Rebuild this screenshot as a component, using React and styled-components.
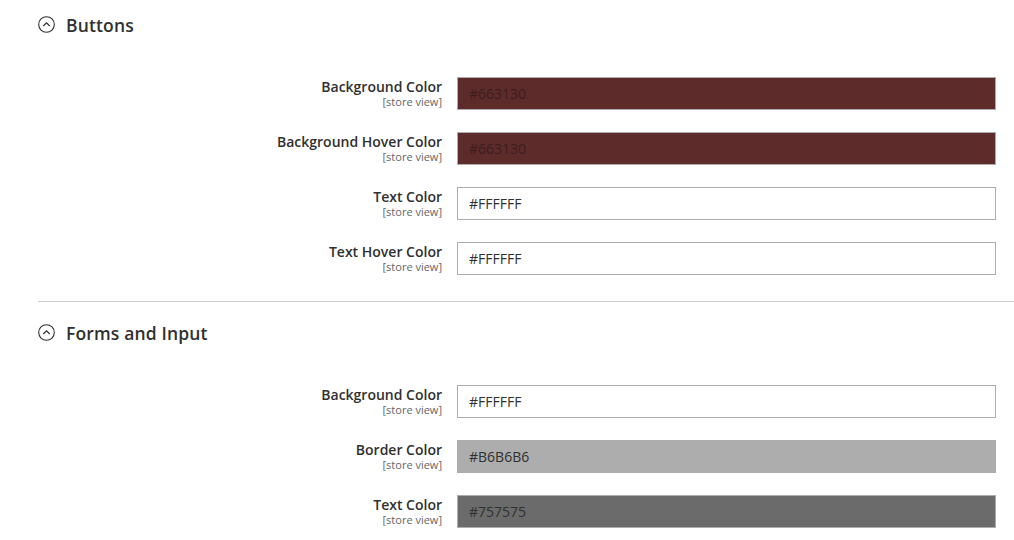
import React from "react";
import styled, { createGlobalStyle } from "styled-components";

const GlobalStyle = createGlobalStyle`
  html, body {
    margin: 0;
    padding: 0;
    background: #ffffff;
  }
  body {
    font-family: "Open Sans", "Liberation Sans", sans-serif;
    color: #303030;
  }
`;

const Page = styled.div`
  width: 1014px;
  height: 540px;
  overflow: hidden;
  padding-left: 38px;
  box-sizing: border-box;
`;

const Section = styled.section`
  padding-bottom: 26px;
  border-bottom: ${(p) => (p.last ? "none" : "1px solid #cccccc")};
  margin-bottom: 6px;
`;

const Header = styled.div`
  display: flex;
  align-items: center;
  gap: 11px;
  height: 49px;
  margin-bottom: 28px;
`;

const Title = styled.h2`
  margin: 0;
  font-size: 17.5px;
  font-weight: 600;
  color: #303030;
  letter-spacing: 0.15px;
`;

const Rows = styled.div`
  display: flex;
  flex-direction: column;
  gap: 22px;
`;

const Row = styled.div`
  display: grid;
  grid-template-columns: 404px 539px;
  column-gap: 15px;
  align-items: start;
`;

const LabelBox = styled.div`
  display: flex;
  flex-direction: column;
  align-items: flex-end;
  padding-top: 1px;
`;

const Label = styled.span`
  font-size: 14px;
  line-height: 18px;
  font-weight: 600;
  color: #303030;
`;

const Scope = styled.span`
  font-size: 11px;
  line-height: 12px;
  color: #666666;
`;

const Field = styled.div`
  height: 33px;
  box-sizing: border-box;
  border: 1px solid #adadad;
  background: ${(p) => p.bg || "#ffffff"};
  display: flex;
  align-items: center;
  padding: 0 11px;
  font-size: 14px;
  color: ${(p) => p.fg || "#303030"};
`;

const Toggle = () => (
  <svg width="17" height="17" viewBox="0 0 17 17" aria-hidden="true">
    <circle cx="8.5" cy="8.5" r="7.8" fill="none" stroke="#303030" strokeWidth="1.1" />
    <path d="M5.3 10 L8.5 6.8 L11.7 10" fill="none" stroke="#303030" strokeWidth="1.2" />
  </svg>
);

const sections = [
  {
    title: "Buttons",
    rows: [
      { label: "Background Color", value: "#663130", bg: "#5e2b2b", fg: "#3b1d1d" },
      { label: "Background Hover Color", value: "#663130", bg: "#5e2b2b", fg: "#3b1d1d" },
      { label: "Text Color", value: "#FFFFFF" },
      { label: "Text Hover Color", value: "#FFFFFF" },
    ],
  },
  {
    title: "Forms and Input",
    rows: [
      { label: "Background Color", value: "#FFFFFF" },
      { label: "Border Color", value: "#B6B6B6", bg: "#adadad", fg: "#303030" },
      { label: "Text Color", value: "#757575", bg: "#6b6b6b", fg: "#303030" },
    ],
  },
];

export default function App() {
  return (
    <Page>
      <GlobalStyle />
      {sections.map((s, i) => (
        <Section key={s.title} last={i === sections.length - 1}>
          <Header>
            <Toggle />
            <Title>{s.title}</Title>
          </Header>
          <Rows>
            {s.rows.map((r) => (
              <Row key={r.label}>
                <LabelBox>
                  <Label>{r.label}</Label>
                  <Scope>[store view]</Scope>
                </LabelBox>
                <Field bg={r.bg} fg={r.fg}>
                  {r.value}
                </Field>
              </Row>
            ))}
          </Rows>
        </Section>
      ))}
    </Page>
  );
}
